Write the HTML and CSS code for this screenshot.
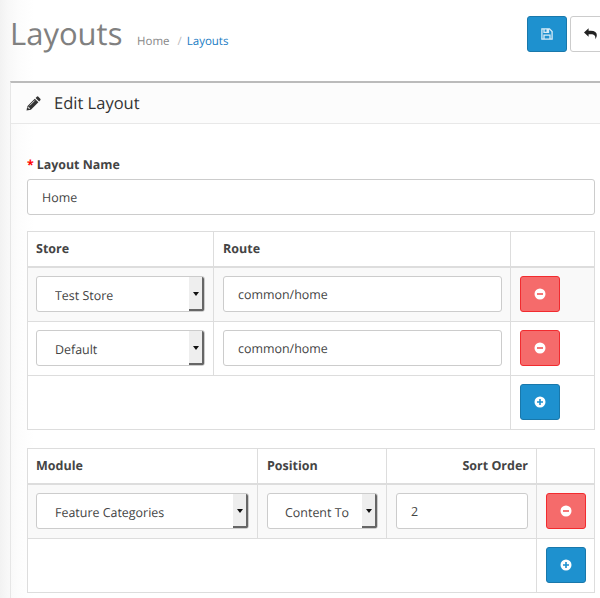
FILE: index.html
```html
<!DOCTYPE html>
<html lang="en">
<head>
<meta charset="utf-8">
<title>Layouts</title>
<link rel="stylesheet" href="styles.css">
</head>
<body>
<svg class="defs" width="0" height="0">
  <symbol id="minus" viewBox="0 0 12 12"><circle cx="6" cy="6" r="5.5" fill="#fff"/><path d="M3 6h6" stroke="#f04a4a" stroke-width="1.5"/></symbol>
  <symbol id="plus" viewBox="0 0 12 12"><circle cx="6" cy="6" r="5.5" fill="#fff"/><path d="M3 6h6M6 3v6" stroke="#1e91cf" stroke-width="1.6"/></symbol>
</svg>
<header class="page-header">
  <h1>Layouts</h1>
  <nav class="breadcrumb"><span>Home</span><span class="sep">/</span><a>Layouts</a></nav>
  <div class="actions">
    <button class="btn primary"><svg width="12" height="12" viewBox="0 0 12 12" fill="none" stroke="#d9ecf8" stroke-width="1.3"><path d="M.9.9h7.6l2.6 2.6v7.6H.9zM3 1v3.3h4.5V1M3 11V7.2h6V11"/><path d="M6.3 1v3" stroke-width="1.6"/></svg></button>
    <button class="btn back"><svg width="14" height="12" viewBox="0 0 14 12"><path d="M0 4.4 4.600.2v2.500h2.200c4 0 6 1.600 6 4.400 0 1.700-.7 3-1.500 4.200.4-3.600-.9-5-4.400-5H4.600v2.500z" fill="#222"/></svg></button>
  </div>
</header>
<main class="panel">
  <div class="panel-heading">
    <svg width="15" height="15" viewBox="0 0 15 15"><path d="M.5 14.500l.8-4.300L8.800 2.700l3.600 3.600-7.500 7.500zM9.600 1.900l1.200-1.200q.8-.7 1.600 0l1.900 2q.7.8 0 1.600l-1.200 1.200z" fill="#333"/><path d="M2 10.500v1.300h1.300V13M3.700 9.500l5-5" fill="none" stroke="#fff" stroke-width=".8"/></svg>
    <h2>Edit Layout</h2>
  </div>
  <div class="panel-body">
    <label class="name-label"><span class="required">*</span>Layout Name</label>
    <div class="control name">Home</div>
    <table class="routes">
      <colgroup><col class="store"><col class="route"><col class="act"></colgroup>
      <thead><tr><th>Store</th><th>Route</th><th></th></tr></thead>
      <tbody>
        <tr class="odd"><td><div class="control select"><span>Test Store</span><i></i></div></td><td><div class="control">common/home</div></td><td><button class="btn danger"><svg width="12" height="12"><use href="#minus"/></svg></button></td></tr>
        <tr><td><div class="control select"><span>Default</span><i></i></div></td><td><div class="control">common/home</div></td><td><button class="btn danger"><svg width="12" height="12"><use href="#minus"/></svg></button></td></tr>
        <tr><td colspan="2"></td><td><button class="btn primary"><svg width="12" height="12"><use href="#plus"/></svg></button></td></tr>
      </tbody>
    </table>
    <table class="modules">
      <colgroup><col class="module"><col class="position"><col class="sort"><col class="act"></colgroup>
      <thead><tr><th>Module</th><th>Position</th><th class="right">Sort Order</th><th></th></tr></thead>
      <tbody>
        <tr class="odd"><td><div class="control select"><span>Feature Categories</span><i></i></div></td><td><div class="control select"><span>Content Top</span><i></i></div></td><td><div class="control">2</div></td><td><button class="btn danger"><svg width="12" height="12"><use href="#minus"/></svg></button></td></tr>
        <tr><td colspan="3"></td><td><button class="btn primary"><svg width="12" height="12"><use href="#plus"/></svg></button></td></tr>
      </tbody>
    </table>
  </div>
</main>
</body>
</html>
```
FILE: styles.css
```css
* { box-sizing: border-box; }
body {
  margin: 0;
  height: 598px;
  overflow: hidden;
  background: linear-gradient(90deg, #f2f2f2 0, #f8f8f8 8px, #fcfcfc 18px, #fff 34px);
  font: 12.45px/18px "Open Sans", sans-serif;
  text-rendering: geometricPrecision;
  color: #444;
}
.defs { position: absolute; }
h1, h2 { margin: 0; font-weight: 400; }
.page-header { display: flex; height: 81px; padding-left: 10px; }
h1 { width: 127px; padding-top: 12px; font-size: 31px; line-height: 44px; color: #808080; }
.breadcrumb { padding-top: 33px; font-size: 11.5px; color: #888; white-space: nowrap; }
.sep { margin: 0 5px 0 8px; color: #bbb; }
.breadcrumb a { color: #1a7dc4; }
.actions { display: flex; gap: 3px; margin: 16px -10px 0 auto; }
.btn {
  display: flex; align-items: center; justify-content: center;
  width: 40px; height: 36px; padding: 0;
  border: 1px solid #1978ab; border-radius: 3px; background: #1e91cf;
}
.btn.danger { border-color: #f22b2f; background: #f56b6b; }
.btn.back { padding-left: 2px; border-color: #ccc; background: #fff; }
.panel { margin-left: 10px; height: 540px; border-top: 2px solid #bbb; border-left: 1px solid #e6e6e6; }
.panel-heading {
  display: flex; align-items: center; gap: 13px; height: 41px; padding-left: 15px;
  border-bottom: 1px solid #e8e8e8; background: #fcfcfc;
}
h2 { font-size: 16.5px; line-height: 22px; color: #333; }
.panel-body { padding: 32px 5px 0 16px; }
.name-label { display: block; height: 23px; font-size: 12.4px; font-weight: 700; }
.required { margin-right: 3px; color: #f00; }
.control {
  height: 36px; padding: 9px 14px 7px; border: 1px solid #ccc; border-radius: 3px;
  background: #fff; white-space: nowrap; overflow: hidden;
}
table {
  width: 568px; table-layout: fixed; border-collapse: separate; border-spacing: 0;
  border: solid #ddd; border-width: 1px 0 0 1px; background: #fff;
}
.name { margin-bottom: 16px; }
.modules { margin-top: 18px; }
th, td { border-right: 1px solid #ddd; border-bottom: 1px solid #ddd; }
th { height: 36px; padding: 0 8px; border-bottom-width: 2px; text-align: left; font-size: 12.5px; }
th + th { padding-left: 9px; }
td { height: 54px; padding: 8px 9px 9px 8px; }
td + td { padding: 8px 8px 9px 9px; }
.right { text-align: right; }
.odd td { background: #f9f9f9; }
.store { width: 186px; }
.route { width: 297px; }
.module { width: 230px; }
.position { width: 129px; }
.sort { width: 150px; }
.select { display: flex; padding: 0; }
.select span { flex: 1; margin: 10px 13px 0 18px; overflow: hidden; }
td + td .select span { margin-left: 17px; }
td:first-child .select { margin-right: -1px; }
.select i {
  display: grid; place-items: center; width: 15px; height: 34px;
  border: solid #666; border-width: 0 2px 2px 0; background: #eee;
}
.select i::before { content: ""; margin-top: 2px; border: solid transparent; border-width: 4px 3.5px 0; border-top-color: #111; }
```
